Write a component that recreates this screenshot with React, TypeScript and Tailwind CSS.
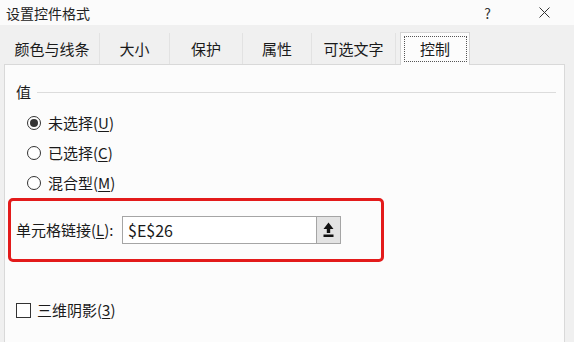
import React from "react";

const tabs = [
  { label: "颜色与线条", w: "w-[95px]" },
  { label: "大小", w: "w-[70px]" },
  { label: "保护", w: "w-[73px]" },
  { label: "属性", w: "w-[69px]" },
  { label: "可选文字", w: "w-[84px]" },
];

function Radio({ checked, label, mnemonic }: { checked?: boolean; label: string; mnemonic: string }) {
  return (
    <div className="flex h-[30px] items-center pl-[22px]">
      <span className="flex h-[14px] w-[14px] items-center justify-center rounded-full border border-[#333] bg-white">
        {checked && <span className="h-[8px] w-[8px] rounded-full bg-[#333]" />}
      </span>
      <span className="ml-[7px] text-[15px] leading-[18px] text-[#1a1a1a]">
        {label}(<span className="underline underline-offset-2">{mnemonic}</span>)
      </span>
    </div>
  );
}

export default function App() {
  return (
    <div
      className="flex h-[342px] w-[574px] flex-col overflow-hidden bg-[#f0f0f0] text-[#1a1a1a]"
      style={{ fontFamily: '"Noto Sans CJK SC", "Microsoft YaHei", sans-serif' }}
    >
      {/* title bar */}
      <div className="flex h-[25px] shrink-0 items-center justify-between bg-[#fbfbfb] pl-[6px]">
        <span className="text-[14px] leading-[16px] text-[#222]">设置控件格式</span>
        <div className="flex items-center">
          <span className="mr-[48px] text-[14px] leading-[16px] text-[#333]">?</span>
          <svg width="11" height="11" viewBox="0 0 11 11" className="mr-[24px]">
            <path d="M0.5 0.5 L10.5 10.5 M10.5 0.5 L0.5 10.5" stroke="#333" strokeWidth="1" fill="none" />
          </svg>
        </div>
      </div>

      {/* tabs */}
      <div className="mt-[8px] flex h-[31px] shrink-0 items-end pl-[5px]">
        {tabs.map((t) => (
          <div
            key={t.label}
            className={`${t.w} flex h-[31px] items-center justify-center border-r border-[#e2e2e2] bg-[#f0f0f0] text-[15px] leading-[18px] text-[#1a1a1a]`}
          >
            {t.label}
          </div>
        ))}
        <div className="relative z-10 ml-[4px] mb-[-1px] flex h-[33px] w-[70px] items-start justify-center border border-b-0 border-[#d5d5d5] bg-[#fcfcfc] pt-[3px]">
          <div className="flex h-[26px] w-[63px] items-center justify-center border border-dotted border-[#555] text-[15px] leading-[18px]">
            控制
          </div>
        </div>
      </div>

      {/* panel */}
      <div className="ml-[4px] mr-[9px] flex flex-1 flex-col border border-b-0 border-[#d9d9d9] bg-[#fcfcfc]">
        <div className="mt-[19px] flex h-[16px] items-center pl-[11px] pr-[8px]">
          <span className="text-[15px] leading-[16px]">值</span>
          <div className="ml-[6px] h-px flex-1 bg-[#dcdcdc]" />
        </div>

        <div className="mt-[8px] flex flex-col">
          <Radio checked label="未选择" mnemonic="U" />
          <Radio label="已选择" mnemonic="C" />
          <Radio label="混合型" mnemonic="M" />
        </div>

        <div className="ml-[3px] flex h-[64px] w-[376px] items-center rounded-[5px] border-[3px] border-[#e31b1b] pl-[5px]">
          <span className="w-[106px] text-[15px] leading-[18px]">
            单元格链接(<span className="underline underline-offset-2">L</span>):
          </span>
          <div className="flex h-[28px] w-[195px] items-center border border-[#a5a5a5] bg-white pl-[5px] text-[16px] leading-[18px]">
            $E$26
          </div>
          <div className="flex h-[28px] w-[24px] items-center justify-center border border-l-0 border-[#a5a5a5] bg-[#e3e3e3]">
            <svg width="11" height="16" viewBox="0 0 11 16">
              <path d="M5.5 0.5 L10.5 7 L7.2 7 L7.2 11 L3.8 11 L3.8 7 L0.5 7 Z" fill="#111" />
              <rect x="0.5" y="12.5" width="10" height="2.5" fill="#111" />
            </svg>
          </div>
        </div>

        <div className="mt-[40px] flex h-[16px] items-center pl-[11px]">
          <span className="h-[15px] w-[15px] border border-[#333] bg-white" />
          <span className="ml-[6px] text-[15px] leading-[18px]">
            三维阴影(<span className="underline underline-offset-2">3</span>)
          </span>
        </div>
      </div>
    </div>
  );
}
